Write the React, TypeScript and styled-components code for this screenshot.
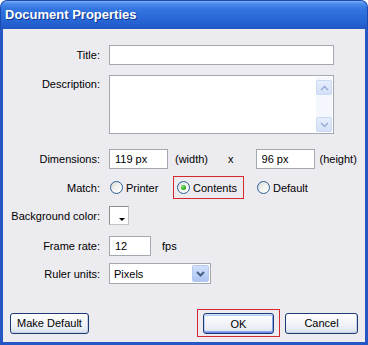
import React from 'react';
import styled, { createGlobalStyle } from 'styled-components';

const Global = createGlobalStyle`
  html, body { margin: 0; padding: 0; background: #ffffff; }
  body { font-family: "Liberation Sans", Arial, sans-serif; font-size: 11px; color: #000; }
  * { box-sizing: border-box; }
`;

const Window = styled.div`
  width: 368px;
  height: 345px;
  display: flex;
  flex-direction: column;
  overflow: hidden;
`;

const TitleBar = styled.div`
  flex: 0 0 29px;
  height: 29px;
  border-radius: 7px 7px 0 0;
  background: linear-gradient(to bottom, #7eaef5 0%, #4a8bea 10%, #3274e0 30%, #2b6bd9 55%, #2561d1 80%, #1e56c4 100%);
  border: 1px solid #1a4bb2;
  border-bottom: none;
  display: flex;
  align-items: center;
  padding: 0 0 1px 4px;
  color: #ffffff;
  font-weight: bold;
  font-size: 13px;
  text-shadow: 1px 1px 0 #10368f;
`;

const Body = styled.div`
  flex: 1;
  display: flex;
  flex-direction: column;
  background: #ecebf0;
  border: 3px solid #2456c4;
  border-top: none;
  padding-top: 16px;
`;

const Row = styled.div<{ $mt: number; $h: number; $top?: boolean }>`
  display: flex;
  align-items: ${p => (p.$top ? 'flex-start' : 'center')};
  margin-top: ${p => p.$mt}px;
  height: ${p => p.$h}px;
`;

const Label = styled.span<{ $top?: boolean }>`
  flex: 0 0 97px;
  width: 97px;
  margin-right: 9px;
  text-align: right;
  white-space: nowrap;
  padding-top: ${p => (p.$top ? '3px' : '0')};
`;

const TextInput = styled.input<{ $w: number }>`
  width: ${p => p.$w}px;
  height: 100%;
  border: 1px solid #a3a9b1;
  background: #ffffff;
  padding: 0 5px;
  font-family: "Liberation Sans", Arial, sans-serif;
  font-size: 11px;
  color: #000;
  outline: none;
  margin: 0;
`;

const TextArea = styled.div`
  width: 225px;
  height: 100%;
  border: 1px solid #a3a9b1;
  background: #ffffff;
  display: flex;
  justify-content: flex-end;
  padding: 1px;
`;

const ScrollBar = styled.div`
  width: 16px;
  height: 100%;
  background: #f4f7fd;
  display: flex;
  flex-direction: column;
  justify-content: space-between;
  padding: 3px 0 0 0;
`;

const ScrollButton = styled.div`
  width: 16px;
  height: 15px;
  border: 1px solid #c9d8f3;
  border-radius: 2px;
  background: linear-gradient(to bottom, #e6eefc, #d3e0f8);
  display: flex;
  align-items: center;
  justify-content: center;
`;

const Plain = styled.span<{ $ml: number }>`
  margin-left: ${p => p.$ml}px;
  white-space: nowrap;
`;

const Option = styled.span<{ $w?: number; $ml?: number; $marked?: boolean }>`
  display: inline-flex;
  align-items: center;
  gap: 3px;
  height: 100%;
  width: ${p => (p.$w ? `${p.$w}px` : 'auto')};
  margin-left: ${p => p.$ml ?? 0}px;
  border: 1px solid ${p => (p.$marked ? '#d42a2e' : 'transparent')};
  padding-left: ${p => (p.$marked ? 3 : 0)}px;
  white-space: nowrap;
`;

const Radio = styled.span<{ $on?: boolean }>`
  width: 13px;
  height: 13px;
  flex: 0 0 13px;
  border-radius: 50%;
  border: 1px solid #2a5f99;
  background: linear-gradient(135deg, #d6d6d0 0%, #f1f1ee 45%, #ffffff 100%);
  display: inline-flex;
  align-items: center;
  justify-content: center;
  &::after {
    content: ${p => (p.$on ? '""' : 'none')};
    width: 5px;
    height: 5px;
    border-radius: 50%;
    background: radial-gradient(circle at 35% 35%, #7be36a 0%, #2eac22 60%, #1f8d18 100%);
  }
`;

const Swatch = styled.div`
  width: 20px;
  height: 19px;
  border: 1px solid #8c8d8f;
  border-right-color: #c4c4c6;
  border-bottom-color: #c4c4c6;
  background: #ffffff;
  display: flex;
  align-items: flex-end;
  justify-content: flex-end;
  padding: 0 3px 3px 0;
`;

const SwatchArrow = styled.span`
  width: 0;
  height: 0;
  border-left: 3px solid transparent;
  border-right: 3px solid transparent;
  border-top: 3px solid #000;
`;

const Select = styled.div`
  width: 102px;
  height: 100%;
  border: 1px solid #a3a9b1;
  background: #ffffff;
  display: flex;
  align-items: center;
  justify-content: space-between;
  padding: 1px 1px 1px 4px;
`;

const SelectButton = styled.div`
  width: 17px;
  height: 100%;
  border: 1px solid #b7c9ef;
  border-radius: 2px;
  background: linear-gradient(to bottom, #d2e0fb 0%, #bcd0f7 60%, #aec4f1 100%);
  display: flex;
  align-items: center;
  justify-content: center;
`;

const Footer = styled.div`
  display: flex;
  align-items: center;
  margin-top: 25px;
  padding: 0 7px;
`;

const Spacer = styled.div`
  flex: 1;
`;

const Mark = styled.div`
  border: 1px solid #d42a2e;
  padding: 3px 5px 2px 5px;
  display: flex;
`;

const Button = styled.button<{ $w: number; $default?: boolean; $ml?: number }>`
  width: ${p => p.$w}px;
  height: 21px;
  margin: 0 0 0 ${p => p.$ml ?? 0}px;
  padding: 0;
  border: 1px solid #1b3a73;
  border-radius: 3px;
  background: linear-gradient(to bottom, #ffffff 0%, #f6f7fa 35%, #e9edf4 75%, #d7dfec 100%);
  font-family: "Liberation Sans", Arial, sans-serif;
  font-size: 11px;
  color: #000;
  box-shadow: ${p =>
    p.$default
      ? 'inset 0 1px 0 #cfe2ff, inset 0 -1px 0 #6f8ae8, inset 1px 0 0 #bcd3f6, inset -1px 0 0 #86a6ee, inset 0 2px 0 #b9d1fa, inset 0 -2px 0 #8ea9ef'
      : 'inset -1px -1px 0 #c8d2e4'};
`;

const Chevron: React.FC<{ up?: boolean; color: string; w?: number }> = ({ up, color, w = 1.5 }) => (
  <svg width="9" height="6" viewBox="0 0 9 6">
    <polyline
      points={up ? '1,5 4.5,1.5 8,5' : '1,1 4.5,4.5 8,1'}
      fill="none"
      stroke={color}
      strokeWidth={w}
    />
  </svg>
);

export default function App() {
  return (
    <>
      <Global />
      <Window>
        <TitleBar>Document Properties</TitleBar>
        <Body>
          <Row $mt={0} $h={20}>
            <Label>Title:</Label>
            <TextInput $w={225} defaultValue="" readOnly />
          </Row>
          <Row $mt={10} $h={59} $top>
            <Label $top>Description:</Label>
            <TextArea>
              <ScrollBar>
                <ScrollButton>
                  <Chevron up color="#98acd3" />
                </ScrollButton>
                <ScrollButton>
                  <Chevron color="#98acd3" />
                </ScrollButton>
              </ScrollBar>
            </TextArea>
          </Row>
          <Row $mt={15} $h={20}>
            <Label>Dimensions:</Label>
            <TextInput $w={59} defaultValue="119 px" readOnly />
            <Plain $ml={7}>(width)</Plain>
            <Plain $ml={20}>x</Plain>
            <Plain $ml={22} />
            <TextInput $w={59} defaultValue="96 px" readOnly />
            <Plain $ml={5}>(height)</Plain>
          </Row>
          <Row $mt={7} $h={23}>
            <Label>Match:</Label>
            <Option $w={64}>
              <Radio />
              Printer
            </Option>
            <Option $w={71} $marked>
              <Radio $on />
              Contents
            </Option>
            <Option $ml={12}>
              <Radio />
              Default
            </Option>
          </Row>
          <Row $mt={7} $h={19}>
            <Label>Background color:</Label>
            <Swatch>
              <SwatchArrow />
            </Swatch>
          </Row>
          <Row $mt={11} $h={20}>
            <Label>Frame rate:</Label>
            <TextInput $w={42} defaultValue="12" readOnly />
            <Plain $ml={11}>fps</Plain>
          </Row>
          <Row $mt={7} $h={21}>
            <Label>Ruler units:</Label>
            <Select>
              <span>Pixels</span>
              <SelectButton>
                <Chevron color="#4b5e86" w={2} />
              </SelectButton>
            </Select>
          </Row>
          <Footer>
            <Button $w={79}>Make Default</Button>
            <Spacer />
            <Mark>
              <Button $w={71} $default>
                OK
              </Button>
            </Mark>
            <Button $w={73} $ml={5}>
              Cancel
            </Button>
          </Footer>
        </Body>
      </Window>
    </>
  );
}
